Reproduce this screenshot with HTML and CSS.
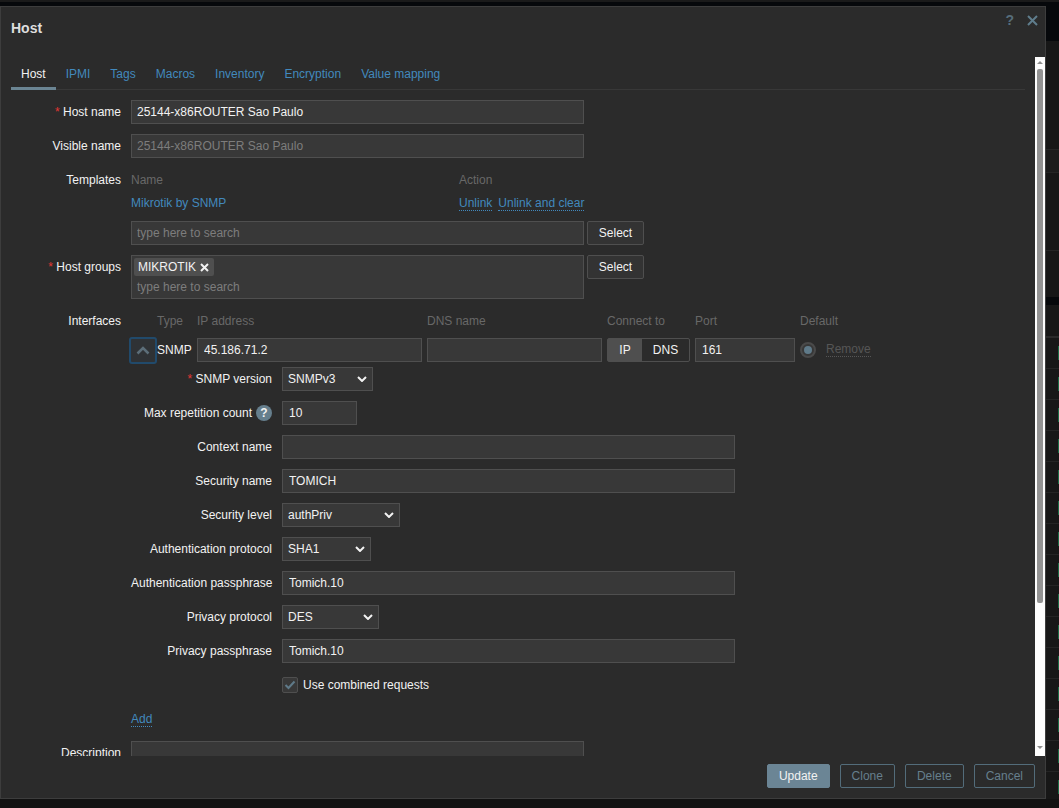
FILE: index.html
```html
<!DOCTYPE html>
<html lang="en">
<head>
<meta charset="utf-8">
<title>Host</title>
<link rel="stylesheet" href="styles.css">
</head>
<body>
<div class="bg-top"></div>
<div class="bg-rest">
  <div class="strip">
    <div class="s-plain s-108"></div>
    <div class="s-line"></div>
    <div class="s-lift s-22"></div>
    <div class="s-line"></div>
    <div class="s-plain s-77"></div>
    <div class="s-line"></div>
    <div class="s-plain s-46"></div>
    <div class="s-dark"></div>
    <div class="s-plain s-31"></div>
    <div class="s-band"></div>
    <div class="s-rows"></div>
  </div>
</div>

<section class="dialog">
  <header class="dialog-head">
    <h1 class="dialog-title">Host</h1>
    <div class="dialog-actions">
      <span class="help">?</span>
      <svg class="close" width="11" height="11" viewBox="0 0 11 11"><path d="M1 1l9 9M10 1l-9 9"/></svg>
    </div>
  </header>

  <div class="dialog-main">
    <div class="scroll">
      <nav class="tabs">
        <a class="tab tab-on">Host</a>
        <a class="tab">IPMI</a>
        <a class="tab">Tags</a>
        <a class="tab">Macros</a>
        <a class="tab">Inventory</a>
        <a class="tab">Encryption</a>
        <a class="tab">Value mapping</a>
      </nav>

      <form class="form">
        <label class="lbl"><span class="req">*</span> Host name</label>
        <div class="val"><input class="inp w-main" value="25144-x86ROUTER Sao Paulo"></div>

        <label class="lbl">Visible name</label>
        <div class="val"><input class="inp w-main inp-dim" value="25144-x86ROUTER Sao Paulo"></div>

        <label class="lbl">Templates</label>
        <div class="val">
          <div class="tpl-row tpl-head"><span class="tpl-name muted">Name</span><span class="muted">Action</span></div>
          <div class="tpl-row tpl-item">
            <span class="tpl-name"><a class="link">Mikrotik by SNMP</a></span>
            <span class="tpl-links"><a class="link dotted">Unlink</a><a class="link dotted">Unlink and clear</a></span>
          </div>
          <div class="with-btn">
            <input class="inp w-main" placeholder="type here to search">
            <button type="button" class="btn">Select</button>
          </div>
        </div>

        <label class="lbl"><span class="req">*</span> Host groups</label>
        <div class="val">
          <div class="with-btn">
            <div class="multi w-main">
              <span class="tag">MIKROTIK<svg class="tag-x" width="9" height="9" viewBox="0 0 9 9"><path d="M1 1l7 7M8 1l-7 7"/></svg></span>
              <span class="multi-ph">type here to search</span>
            </div>
            <button type="button" class="btn">Select</button>
          </div>
        </div>

        <label class="lbl">Interfaces</label>
        <div class="val">
          <div class="if-grid if-head muted">
            <span></span><span>Type</span><span>IP address</span><span>DNS name</span><span>Connect to</span><span>Port</span><span class="if-default">Default</span>
          </div>
          <div class="if-grid if-row">
            <span class="toggle"><svg width="14" height="9" viewBox="0 0 14 9"><path d="M1.5 7.5L7 2l5.5 5.5"/></svg></span>
            <span class="if-type">SNMP</span>
            <input class="inp" value="45.186.71.2">
            <input class="inp" value="">
            <span class="seg"><span class="seg-a seg-on">IP</span><span class="seg-a seg-b">DNS</span></span>
            <input class="inp" value="161">
            <span class="radio"><span class="radio-dot"></span></span>
            <a class="remove">Remove</a>
          </div>

          <div class="snmp">
            <label class="lbl"><span class="req">*</span> SNMP version</label>
            <div class="select w-91">SNMPv3<svg class="chev" width="10" height="6" viewBox="0 0 10 6"><path d="M1 1l4 4 4-4"/></svg></div>

            <label class="lbl lbl-help">Max repetition count<span class="hint">?</span></label>
            <input class="inp w-75" value="10">

            <label class="lbl">Context name</label>
            <input class="inp w-453" value="">

            <label class="lbl">Security name</label>
            <input class="inp w-453" value="TOMICH">

            <label class="lbl">Security level</label>
            <div class="select w-118">authPriv<svg class="chev" width="10" height="6" viewBox="0 0 10 6"><path d="M1 1l4 4 4-4"/></svg></div>

            <label class="lbl">Authentication protocol</label>
            <div class="select w-89">SHA1<svg class="chev" width="10" height="6" viewBox="0 0 10 6"><path d="M1 1l4 4 4-4"/></svg></div>

            <label class="lbl">Authentication passphrase</label>
            <input class="inp w-453" value="Tomich.10">

            <label class="lbl">Privacy protocol</label>
            <div class="select w-97">DES<svg class="chev" width="10" height="6" viewBox="0 0 10 6"><path d="M1 1l4 4 4-4"/></svg></div>

            <label class="lbl">Privacy passphrase</label>
            <input class="inp w-453" value="Tomich.10">

            <span></span>
            <div class="check-row">
              <span class="check"><svg width="12" height="10" viewBox="0 0 12 10"><path d="M1.5 5l3 3 6-6.5"/></svg></span>
              <span>Use combined requests</span>
            </div>
          </div>

          <div class="add-row"><a class="link dotted">Add</a></div>
        </div>

        <label class="lbl">Description</label>
        <div class="val"><textarea class="inp w-main area"></textarea></div>
      </form>
    </div>

    <div class="scrollbar">
      <span class="arrow arrow-up"></span>
      <span class="thumb"></span>
      <span class="arrow arrow-down"></span>
    </div>
  </div>

  <footer class="dialog-foot">
    <button type="button" class="fbtn fbtn-main">Update</button>
    <button type="button" class="fbtn">Clone</button>
    <button type="button" class="fbtn">Delete</button>
    <button type="button" class="fbtn">Cancel</button>
  </footer>
</section>
</body>
</html>
```

FILE: styles.css
```css
* { box-sizing: border-box; }

html, body {
  margin: 0;
  height: 808px;
  overflow: hidden;
}

body {
  position: relative;
  background: #121212;
  color: #f2f2f2;
  font: 12px/24px "Liberation Sans", Arial, sans-serif;
}

/* page dimmed behind the dialog */
.bg-top {
  height: 41px;
  background: #06080b;
  border-top: 2px solid #1a1a1a;
}

.bg-rest {
  display: flex;
  justify-content: flex-end;
}

.strip {
  width: 13px;
  display: flex;
  flex-direction: column;
}

.s-plain { background: #171717; }
.s-108 { height: 108px; }
.s-77 { height: 77px; }
.s-46 { height: 46px; }
.s-31 { height: 31px; }
.s-22 { height: 22px; }
.s-line { height: 1px; background: #252525; }
.s-lift { background: #1c1c1c; }
.s-dark { height: 8px; background: #06080b; }
.s-band { height: 2px; background: #2a2a2a; }
.s-rows {
  height: 461px;
  background:
    linear-gradient(transparent 8px, #1a6b45 8px, #1a6b45 22px, transparent 22px) right top / 1px 31px repeat-y,
    linear-gradient(transparent 30px, #242424 30px) left top / 100% 31px repeat-y,
    #171717;
}

/* dialog */
.dialog {
  position: absolute;
  left: 0;
  top: 6px;
  width: 1046px;
  height: 793px;
  display: flex;
  flex-direction: column;
  background: #2b2b2b;
  border: 1px solid #3d3d3d;
}

.dialog-head {
  height: 50px;
  flex: none;
  display: flex;
  justify-content: space-between;
  align-items: flex-start;
  padding: 4px 7px 0 10px;
}

.dialog-title {
  margin: 8px 0 0;
  font-size: 14px;
  line-height: 18px;
  font-weight: bold;
  color: #dedede;
}

.dialog-actions {
  display: flex;
  align-items: center;
  gap: 13px;
  height: 18px;
}

.help {
  font-size: 14px;
  font-weight: bold;
  color: #566d7a;
}

.close path {
  fill: none;
  stroke: #5f7d8c;
  stroke-width: 2;
}

.dialog-main {
  height: 699px;
  flex: none;
  display: flex;
}

.scroll {
  width: 1034px;
  flex: none;
  padding: 0 10px;
  overflow: hidden;
}

/* tabs */
.tabs {
  display: flex;
  height: 33px;
  border-bottom: 1px solid #383838;
  margin-bottom: 10px;
}

.tab {
  height: 33px;
  padding: 5px 10px 0;
  color: #4289bd;
}

.tab-on {
  color: #f2f2f2;
  border-bottom: 3px solid #6b8593;
}

/* form */
.form {
  display: grid;
  grid-template-columns: 110px 1fr;
  column-gap: 10px;
  row-gap: 10px;
}

.lbl {
  text-align: right;
  white-space: nowrap;
  line-height: 24px;
}

.req { color: #e33734; }

.val { min-width: 0; }

.inp {
  display: block;
  height: 24px;
  padding: 0 5px;
  margin: 0;
  background: #383838;
  border: 1px solid #4f4f4f;
  color: #f2f2f2;
  font: 12px "Liberation Sans", Arial, sans-serif;
  outline: 0;
  min-width: 0;
  width: 100%;
}

.inp::placeholder { color: #7d7d7d; opacity: 1; }
.inp-dim { color: #7d7d7d; }

.if-row .inp,
.snmp .inp { padding-left: 6px; }

.w-main { width: 453px; flex: none; }
.w-453 { width: 453px; }
.w-75 { width: 75px; }
.w-91 { width: 91px; }
.w-118 { width: 118px; }
.w-89 { width: 89px; }
.w-97 { width: 97px; }

.muted { color: #686868; }

.link { color: #4289bd; }

.dotted { border-bottom: 1px dotted #4289bd; line-height: 13px; display: inline-block; }

/* templates */
.tpl-row { display: flex; }
.tpl-name { width: 328px; flex: none; }
.tpl-head { height: 24px; }
.tpl-item { height: 22px; margin-bottom: 7px; line-height: 22px; }
.tpl-links { display: flex; gap: 6px; align-items: flex-start; padding-top: 5px; }

.with-btn { display: flex; gap: 3px; align-items: flex-start; }

.btn {
  width: 57px;
  height: 24px;
  padding: 0;
  background: #333;
  border: 1px solid #4f4f4f;
  border-radius: 2px;
  color: #f2f2f2;
  font: 12px "Liberation Sans", Arial, sans-serif;
}

/* multiselect */
.multi {
  height: 44px;
  padding: 2px;
  background: #383838;
  border: 1px solid #4f4f4f;
  display: flex;
  flex-direction: column;
  align-items: flex-start;
}

.tag {
  height: 18px;
  width: 80px;
  padding: 0 0 0 4px;
  display: flex;
  align-items: center;
  justify-content: space-between;
  background: #4f4f4f;
  border-radius: 2px;
  line-height: 18px;
}

.tag-x {
  margin-right: 5px;
}

.tag-x path {
  fill: none;
  stroke: #f2f2f2;
  stroke-width: 2;
}

.multi-ph {
  padding-left: 3px;
  color: #7d7d7d;
  line-height: 22px;
}

/* interfaces */
.if-grid {
  display: grid;
  grid-template-columns: 21px 35px 225px 175px 83px 100px 16px auto;
  grid-template-rows: 24px;
  column-gap: 5px;
  justify-content: start;
}

.if-head { height: 24px; margin-bottom: 5px; }
.if-default { grid-column: span 2; }

.if-row { height: 24px; align-items: center; }

.toggle {
  width: 28px;
  height: 27px;
  margin-left: -2px;
  display: flex;
  align-items: center;
  justify-content: center;
  background: #2f3235;
  border: 2px solid #214a6b;
  border-radius: 3px;
}

.toggle path {
  fill: none;
  stroke: #5c6e79;
  stroke-width: 2.5;
}

.seg {
  display: flex;
  height: 24px;
  border: 1px solid #4f4f4f;
  border-radius: 2px;
  line-height: 22px;
  text-align: center;
}

.seg-a { width: 34px; }
.seg-on { background: #4f4f4f; }
.seg-b { width: 47px; }

.radio {
  width: 16px;
  height: 16px;
  border: 2px solid #4a4a4a;
  border-radius: 50%;
  background: #383838;
  display: flex;
  align-items: center;
  justify-content: center;
}

.radio-dot {
  width: 8px;
  height: 8px;
  border-radius: 50%;
  background: #5f7a89;
}

.remove {
  margin-left: 5px;
  color: #565656;
  border-bottom: 1px dotted #565656;
  line-height: 13px;
  justify-self: start;
}

/* snmp */
.snmp {
  display: grid;
  grid-template-columns: 141px 1fr;
  column-gap: 10px;
  row-gap: 10px;
  margin-top: 5px;
}

.lbl-help {
  display: flex;
  justify-content: flex-end;
  align-items: center;
  gap: 4px;
}

.hint {
  width: 16px;
  height: 16px;
  border-radius: 50%;
  background: #667f8d;
  color: #f2f2f2;
  font-weight: bold;
  line-height: 16px;
  text-align: center;
}

.select {
  height: 24px;
  padding: 0 5px;
  display: flex;
  justify-content: space-between;
  align-items: center;
  background: #383838;
  border: 1px solid #4f4f4f;
}

.chev path {
  fill: none;
  stroke: #f2f2f2;
  stroke-width: 2;
}

.check-row {
  display: flex;
  align-items: center;
  gap: 5px;
}

.check {
  width: 16px;
  height: 16px;
  display: flex;
  align-items: center;
  justify-content: center;
  background: #383838;
  border: 1px solid #4f4f4f;
  border-radius: 2px;
}

.check path {
  fill: none;
  stroke: #5f7a89;
  stroke-width: 2;
}

.add-row { margin-top: 10px; height: 24px; }

.area {
  height: 60px;
  resize: none;
}

/* scrollbar */
.scrollbar {
  width: 10px;
  flex: none;
  background: #fdfdfd;
  display: flex;
  flex-direction: column;
  align-items: center;
}

.arrow {
  width: 0;
  height: 0;
  border-left: 3px solid transparent;
  border-right: 3px solid transparent;
  flex: none;
}

.arrow-up { border-bottom: 3px solid #8f8f8f; margin-top: 4px; }
.arrow-down { border-top: 3px solid #8f8f8f; margin-top: 143px; }

.thumb {
  width: 6px;
  height: 534px;
  flex: none;
  margin-top: 5px;
  background: #939393;
  border-radius: 2px;
}

/* footer */
.dialog-foot {
  flex: 1;
  display: flex;
  justify-content: flex-end;
  gap: 10px;
  padding: 8px 10px 0 0;
}

.fbtn {
  height: 24px;
  padding: 0 11px;
  background: transparent;
  border: 1px solid #536c7a;
  border-radius: 2px;
  color: #667f8d;
  font: 12px "Liberation Sans", Arial, sans-serif;
}

.fbtn-main {
  background: #6b8595;
  border-color: #6b8595;
  color: #f2f2f2;
}
```
